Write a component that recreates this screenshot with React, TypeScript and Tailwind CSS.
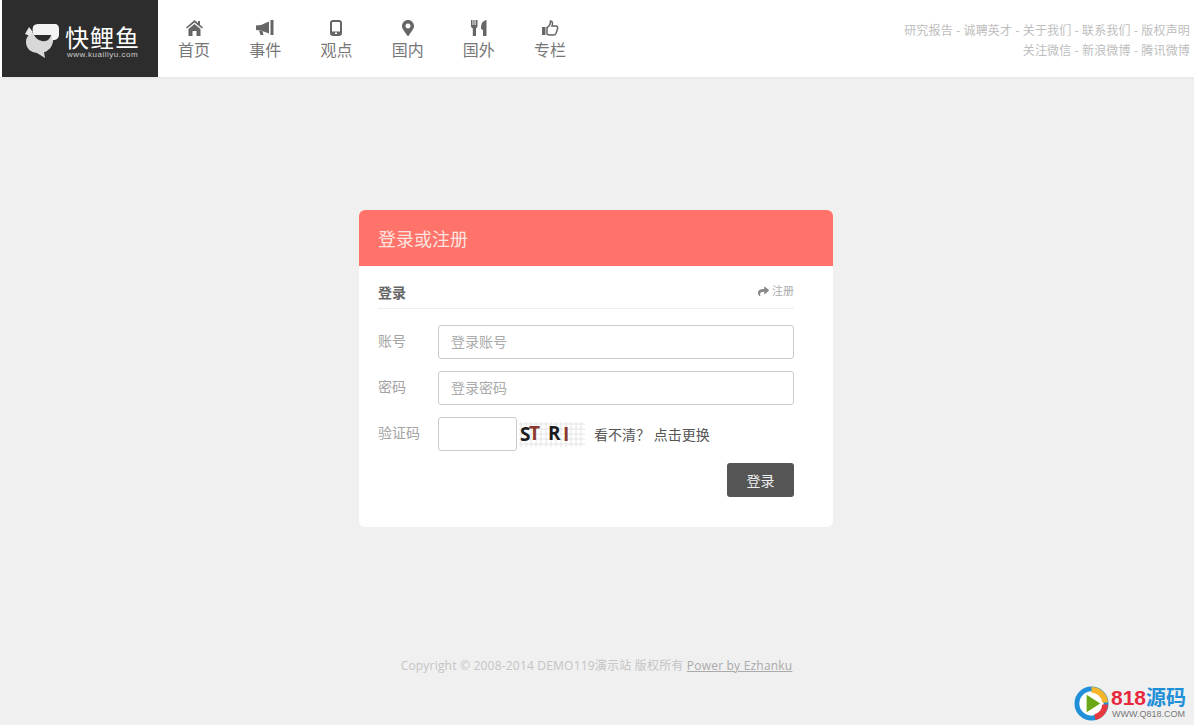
import { FaMapMarkerAlt, FaShare } from 'react-icons/fa'
import type { ReactNode } from 'react'

const cjk = "font-['Open_Sans','Noto_Sans_CJK_SC',sans-serif]"

function HomeIcon() {
  return (
    <svg width="17" height="16" viewBox="0 0 17 16" fill="currentColor">
      <path d="M8.5 0 L12 3 V1 H14 V4.8 L17 7.5 L16 8.6 L8.5 2.4 L1 8.6 L0 7.5 Z" />
      <path d="M2.5 9 L8.5 4 L14.5 9 V16 H10.5 V11 H6.5 V16 H2.5 Z" />
    </svg>
  )
}

function HornIcon() {
  return (
    <svg width="18" height="16" viewBox="0 0 18 16" fill="currentColor">
      <path d="M0 5.5 L5 5 L13 1.5 L13 13.5 L5 10.5 L0 10 Z" />
      <path d="M3 10.5 L6.5 11 L7.5 15 L4.5 15 Z" />
      <rect x="14.5" y="0" width="3" height="15" />
    </svg>
  )
}

function PhoneIcon() {
  return (
    <svg width="12" height="16" viewBox="0 0 12 16">
      <rect x="1" y="1" width="10" height="14" rx="2" fill="none" stroke="currentColor" strokeWidth="2" />
      <rect x="1" y="11.5" width="10" height="3" fill="currentColor" />
      <rect x="5" y="12.5" width="2" height="1.5" fill="#fff" />
    </svg>
  )
}

function ForkKnifeIcon() {
  return (
    <svg width="16" height="16" viewBox="0 0 16 16" fill="currentColor">
      <path d="M0 0 H1.5 V5 H2.4 V0 H3.6 V5 H4.6 V0 H6.5 V6 C6.5 7.5 5.5 8 5 8.2 V16 H1.8 V8.2 C1 8 0 7.5 0 6 Z" />
      <path d="M10 9 C10 4 11 1 15.5 0 V16 H12 V10 Z" />
    </svg>
  )
}

function ThumbIcon() {
  return (
    <svg width="17" height="16" viewBox="0 0 17 16">
      <rect x="0" y="7" width="3.5" height="8" fill="currentColor" />
      <path
        d="M5 7.5 C7 6.5 8.5 4 8.5 1 C10.5 1 11 3.5 10 6 H14 C15.5 6 16 7.5 15.5 9 L14 13.5 C13.5 14.5 12.5 15 11.5 15 H8 C6.5 15 5.5 14.5 5 14 Z"
        fill="none"
        stroke="currentColor"
        strokeWidth="1.5"
      />
    </svg>
  )
}

const navItems: { label: string; icon: ReactNode }[] = [
  { label: '首页', icon: <HomeIcon /> },
  { label: '事件', icon: <HornIcon /> },
  { label: '观点', icon: <PhoneIcon /> },
  { label: '国内', icon: <FaMapMarkerAlt size={16} /> },
  { label: '国外', icon: <ForkKnifeIcon /> },
  { label: '专栏', icon: <ThumbIcon /> },
]

function Logo() {
  return (
    <div className="ml-[2px] flex h-[77px] w-[156px] items-center bg-[#2d2d2d] pl-[22px] text-white">
      <svg width="38" height="36" viewBox="0 0 38 36" className="mt-[4px]">
        <path d="M2 19 C2 12 8 9 14 9 H29 C30 17 29 24 24 27 C22 29 21 29 20 29 L21 35 L13 30 C6 29 2 25 2 19Z" fill="#d8d8d8" />
        <path d="M9 4 C10 1 13 1 16 1 H30 C34 1 35 3 35 6 V11 C35 15 33 17 29 17 H28 V12 H10 C9 9 8 7 9 4Z" fill="#f4f4f4" />
        <path d="M10 12 H27 C26 16 23 19 18 18 C14 17.500 12 15 10 12Z" fill="#2d2d2d" />
        <path d="M1 11 L5 4 L9 9 L6 13 Z" fill="#e8e8e8" />
      </svg>
      <div className="ml-[3px] mt-[5px] flex flex-col items-center">
        <span className="font-['Noto_Sans_CJK_SC',sans-serif] text-[24px] leading-[26px] font-normal tracking-[1px] whitespace-nowrap">
          快鲤鱼
        </span>
        <span className="font-['Liberation_Sans',sans-serif] text-[8px] leading-[9px] tracking-[0.5px] text-[#ccc]">
          www.kuailiyu.com
        </span>
      </div>
    </div>
  )
}

function Header() {
  return (
    <header className={`flex h-[77px] bg-white shadow-[0_1px_3px_rgba(0,0,0,0.06)] ${cjk}`}>
      <Logo />
      <nav className="ml-[0.5px] flex">
        {navItems.map((item) => (
          <a key={item.label} className="flex w-[71.2px] flex-col items-center pt-[18px] text-[#777]">
            <span className="flex h-[20px] items-center text-[#666]">{item.icon}</span>
            <span className="text-[16px] leading-[24px]">{item.label}</span>
          </a>
        ))}
      </nav>
      <div className="ml-auto pt-[21px] pr-[4px] text-right text-[12px] leading-[20px] tracking-[0.17px] text-[#bdbdbd]">
        <p>研究报告 - 诚聘英才 - 关于我们 - 联系我们 - 版权声明</p>
        <p>关注微信 - 新浪微博 - 腾讯微博</p>
      </div>
    </header>
  )
}

function Captcha() {
  const cols = [2, 7, 12, 17, 22, 27, 32, 37, 42, 47, 52, 57, 62]
  const rows = [5, 10, 15, 20, 25]
  return (
    <svg width="66" height="30" viewBox="0 0 66 30" className="ml-[2px] shrink-0">
      {cols.map((x) => (
        <line key={x} x1={x} y1="3" x2={x} y2="28" stroke="#e4e4e4" />
      ))}
      {rows.map((y) => (
        <line key={y} x1="0" y1={y} x2="66" y2={y} stroke="#e4e4e4" />
      ))}
      <g fontFamily="'Open Sans',sans-serif" fontWeight="700" fontSize="19">
        <text x="1" y="22" fill="#1c1c1c">S</text>
        <text x="10" y="21" fill="#8a3a2c">T</text>
        <text x="29" y="21" fill="#1c1c1c">R</text>
        <text x="44" y="22" fill="#8a3a2c">I</text>
      </g>
    </svg>
  )
}

function Field({ label, children }: { label: string; children: ReactNode }) {
  return (
    <div className="flex items-center">
      <label className="w-[60px] shrink-0 pb-[3px] text-[14px] text-[#a3a3a3]">{label}</label>
      {children}
    </div>
  )
}

const inputClass =
  'h-[34px] rounded-[3px] border border-[#ccc] bg-white px-[12px] pb-[2px] text-[14px] text-[#555] outline-none placeholder:text-[#aaa]'

function LoginCard() {
  return (
    <section className="w-[474px] overflow-hidden rounded-[6px] bg-white">
      <h2 className="flex h-[56px] items-center bg-[#ff736b] px-[19px] pt-[3px] text-[18px] font-normal text-[#fde3df]">
        登录或注册
      </h2>
      <form className="pt-[14px] pr-[39px] pb-[30px] pl-[19px]">
        <div className="flex h-[29px] items-start justify-between border-b border-[#eee]">
          <span className="mt-[3px] text-[14px] leading-[20px] font-bold text-[#666]">登录</span>
          <a className="mt-[1px] flex items-center gap-[3px] text-[11px] leading-[20px] text-[#aaa]">
            <FaShare size={11} className="text-[#888]" />
            注册
          </a>
        </div>
        <div className="mt-[16px] flex flex-col gap-[12px]">
          <Field label="账号">
            <input className={`${inputClass} flex-1`} placeholder="登录账号" />
          </Field>
          <Field label="密码">
            <input className={`${inputClass} flex-1`} placeholder="登录密码" />
          </Field>
          <Field label="验证码">
            <input className={`${inputClass} w-[79px]`} />
            <Captcha />
            <span className="ml-[9px] text-[14px] text-[#555]">看不清？ 点击更换</span>
          </Field>
        </div>
        <div className="mt-[12px] flex justify-end">
          <button
            type="button"
            className="h-[34px] w-[67px] rounded-[3px] bg-[#555] text-[14px] text-[#eee]"
          >
            登录
          </button>
        </div>
      </form>
    </section>
  )
}

function Watermark() {
  return (
    <div className="absolute right-[8px] bottom-[4px] flex items-center">
      <svg width="35" height="35" viewBox="0 0 36 36">
        <circle cx="18" cy="18" r="15" fill="#fff" stroke="#1f8fd8" strokeWidth="5" />
        <path d="M18 1 A17 17 0 0 1 35 17 L29 17 A11 11 0 0 0 18 7Z" fill="#f7b52c" />
        <path d="M35 19 A17 17 0 0 1 22 35 L21 29 A11 11 0 0 0 29 19Z" fill="#e8383d" />
        <path d="M13 9 L27 18 L13 27Z" fill="#6aa915" />
      </svg>
      <div className="ml-[2px] flex flex-col items-center">
        <div className="text-[20px] leading-[20px] font-bold whitespace-nowrap">
          <span className="font-['Liberation_Sans',sans-serif] text-[21px] text-[#e8283c]">818</span>
          <span className="font-['Noto_Sans_CJK_SC',sans-serif] text-[#1f8fd8]">源码</span>
        </div>
        <span className="mt-[1px] font-['Liberation_Sans',sans-serif] text-[9px] leading-[11px] text-[#777]">
          WWW.Q818.COM
        </span>
      </div>
    </div>
  )
}

export default function App() {
  return (
    <div className={`relative flex h-[725px] flex-col overflow-hidden bg-[#f0f0f0] ${cjk}`}>
      <Header />
      <main className="flex flex-col items-center pt-[133px] pr-[2px]">
        <LoginCard />
      </main>
      <footer className="mt-[130px] pr-[1px] text-center text-[12px] leading-[18px] tracking-[0.2px] text-[#c4c4c4]">
        Copyright © 2008-2014 DEMO119演示站 版权所有 <a className="text-[#aaa] underline">Power by Ezhanku</a>
      </footer>
      <Watermark />
    </div>
  )
}
